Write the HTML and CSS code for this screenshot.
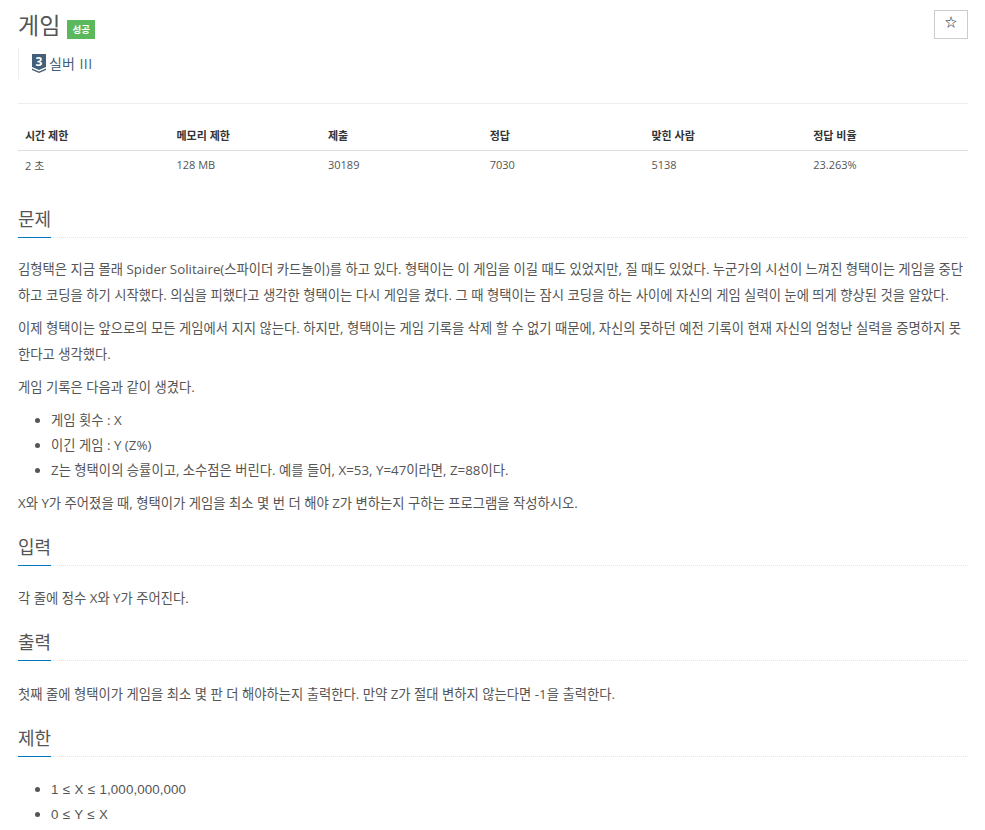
FILE: index.html
```html
<!DOCTYPE html>
<html lang="ko">
<head>
  <meta charset="UTF-8" />
  <title>게임</title>
  <link rel="stylesheet" href="styles.css">
</head>
<body>
  <div class="page">
    <div class="page-header">
      <div class="title-row">
        <h1 class="problem-title">게임</h1>
        <span class="badge">성공</span>
      </div>
      <button class="star-btn">☆</button>
    </div>
    <div class="tier-row">
      <svg class="tier-icon" width="14" height="19" viewBox="0 0 14 19">
        <path d="M0 0H14V13L7 16L0 13Z" fill="#435f7a"/>
        <path d="M0 14.5L7 17.5L14 14.5V16L7 19L0 16Z" fill="#435f7a"/>
        <text x="7" y="11.5" class="tier-num">3</text>
      </svg>
      <span class="tier-name">실버 <span class="tier-level">III</span></span>
    </div>
    <hr class="divider">

    <table class="info-table">
      <colgroup>
        <col class="col-a"><col class="col-a"><col class="col-b"><col class="col-b"><col class="col-b"><col class="col-b">
      </colgroup>
      <thead>
        <tr><th>시간 제한</th><th>메모리 제한</th><th>제출</th><th>정답</th><th>맞힌 사람</th><th>정답 비율</th></tr>
      </thead>
      <tbody>
        <tr><td>2 초</td><td>128 MB</td><td>30189</td><td>7030</td><td>5138</td><td>23.263%</td></tr>
      </tbody>
    </table>

    <section class="section section-problem">
      <div class="headline"><h2>문제</h2></div>
      <p>김형택은 지금 몰래 Spider Solitaire(스파이더 카드놀이)를 하고 있다. 형택이는 이 게임을 이길 때도 있었지만, 질 때도 있었다. 누군가의 시선이 느껴진 형택이는 게임을 중단하고 코딩을 하기 시작했다. 의심을 피했다고 생각한 형택이는 다시 게임을 켰다. 그 때 형택이는 잠시 코딩을 하는 사이에 자신의 게임 실력이 눈에 띄게 향상된 것을 알았다.</p>
      <p>이제 형택이는 앞으로의 모든 게임에서 지지 않는다. 하지만, 형택이는 게임 기록을 삭제 할 수 없기 때문에, 자신의 못하던 예전 기록이 현재 자신의 엄청난 실력을 증명하지 못한다고 생각했다.</p>
      <p>게임 기록은 다음과 같이 생겼다.</p>
      <ul>
        <li>게임 횟수 : X</li>
        <li>이긴 게임 : Y (Z%)</li>
        <li>Z는 형택이의 승률이고, 소수점은 버린다. 예를 들어, X=53, Y=47이라면, Z=88이다.</li>
      </ul>
      <p>X와 Y가 주어졌을 때, 형택이가 게임을 최소 몇 번 더 해야 Z가 변하는지 구하는 프로그램을 작성하시오.</p>
    </section>

    <section class="section">
      <div class="headline"><h2>입력</h2></div>
      <p>각 줄에 정수 X와 Y가 주어진다.</p>
    </section>

    <section class="section section-output">
      <div class="headline"><h2>출력</h2></div>
      <p>첫째 줄에 형택이가 게임을 최소 몇 판 더 해야하는지 출력한다. 만약 Z가 절대 변하지 않는다면 -1을 출력한다.</p>
    </section>

    <section class="section">
      <div class="headline"><h2>제한</h2></div>
      <ul class="limits">
        <li><span class="limit-text">1 ≤ X ≤ 1,000,000,000</span></li>
        <li><span class="limit-text">0 ≤ Y ≤ X</span></li>
      </ul>
    </section>
  </div>
</body>
</html>
```

FILE: styles.css
```css
* { box-sizing: border-box; }

html, body {
  margin: 0;
  padding: 0;
  height: 830px;
  overflow: hidden;
  background: #fff;
}

body {
  font-family: 'Open Sans', 'Noto Sans CJK KR', sans-serif;
  font-size: 13.33px;
  color: #555;
}

.page {
  padding: 0 17px 0 18px;
}

.page-header {
  display: flex;
  justify-content: space-between;
  align-items: flex-start;
  padding-top: 10px;
  height: 48px;
}

.title-row {
  display: flex;
  align-items: center;
  gap: 7px;
}

.problem-title {
  margin: 0;
  font-size: 23px;
  font-weight: 400;
  line-height: 30px;
  color: #555;
}

.badge {
  display: block;
  margin-top: 8px;
  width: 28px;
  height: 19px;
  background: #5cb85c;
  color: #fff;
  font-size: 9.5px;
  font-weight: 700;
  line-height: 19px;
  text-align: center;
}

.star-btn {
  width: 34px;
  height: 29px;
  padding: 0 0 5px;
  background: #fff;
  border: 1px solid #ccc;
  font-family: 'Noto Sans CJK KR', sans-serif;
  font-size: 12px;
  line-height: 1;
  color: #111;
}

.tier-row {
  display: flex;
  align-items: center;
  gap: 3px;
  height: 31px;
  padding-left: 13px;
  border-left: 1px solid #eee;
}

.tier-icon { display: block; }

.tier-num {
  fill: #fff;
  font-size: 12px;
  font-weight: 700;
  text-anchor: middle;
}

.tier-name {
  font-size: 14px;
  line-height: 20px;
  word-spacing: 1px;
  color: #435f7a;
}

.tier-level {
  letter-spacing: 0.5px;
}

.divider {
  margin: 24px 0 0;
  border: 0;
  border-top: 1px solid #eee;
}

.info-table {
  width: 100%;
  margin: 19px 0 29px;
  border-collapse: collapse;
  table-layout: fixed;
  font-size: 11px;
}

.col-a { width: 151.5px; }

.info-table th {
  padding: 0 7px 2px;
  height: 27px;
  text-align: left;
  font-weight: 700;
  color: #333;
  border-bottom: 1px solid #ddd;
}

.info-table td {
  padding: 0 7px;
  height: 29px;
  color: #555;
}

.headline {
  margin-top: 20px;
  margin-bottom: 19px;
  border-bottom: 1px dotted #e6e6e6;
}

.section-problem .headline { margin-bottom: 18px; }
.section-output .headline { margin-bottom: 20px; }

.headline h2 {
  display: block;
  margin: 0 0 -1px;
  width: 33px;
  height: 30px;
  padding-bottom: 7px;
  font-size: 18px;
  font-weight: 400;
  line-height: 23px;
  white-space: nowrap;
  color: #555;
  border-bottom: 1px solid #0076c0;
}

.section p {
  margin: 0 0 7px;
  line-height: 26px;
}

.section ul {
  margin: 8px 0 7px;
  padding-left: 33px;
}

.section li {
  line-height: 25px;
}

.section .limits {
  margin-top: 20px;
}

.limit-text {
  font-family: 'Liberation Sans', sans-serif;
  word-spacing: 0.5px;
  letter-spacing: 0.1px;
}
```
